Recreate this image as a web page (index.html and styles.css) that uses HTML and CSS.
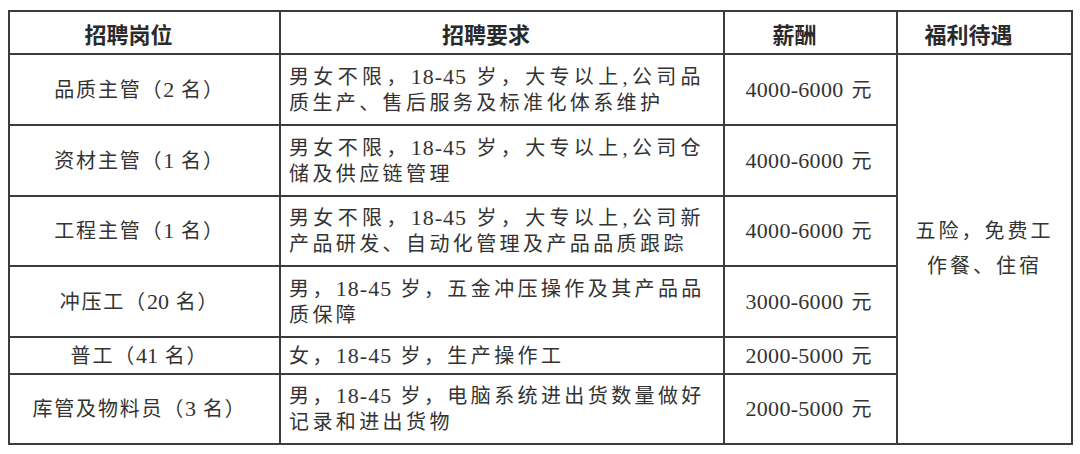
FILE: index.html
```html
<!DOCTYPE html>
<html lang="zh-CN">
<head>
<meta charset="utf-8">
<title>招聘</title>
<link rel="stylesheet" href="styles.css">
</head>
<body>
<table class="jobs">
  <colgroup>
    <col class="c1"><col class="c2"><col class="c3"><col class="c4">
  </colgroup>
  <thead>
    <tr class="head">
      <th>招聘岗位</th>
      <th>招聘要求</th>
      <th>薪酬</th>
      <th>福利待遇</th>
    </tr>
  </thead>
  <tbody>
    <tr class="r2">
      <td class="pos">品质主管（<span class="n">2</span> 名）</td>
      <td class="req"><span class="l1">男女不限，<span class="n">18-45</span> 岁，大专以上,公司品</span>质生产、售后服务及标准化体系维护</td>
      <td class="pay"><span class="n">4000-6000</span> 元</td>
      <td class="ben" rowspan="6">五险，免费工<br>作餐、住宿</td>
    </tr>
    <tr class="r2">
      <td class="pos">资材主管（<span class="n">1</span> 名）</td>
      <td class="req"><span class="l1">男女不限，<span class="n">18-45</span> 岁，大专以上,公司仓</span>储及供应链管理</td>
      <td class="pay"><span class="n">4000-6000</span> 元</td>
    </tr>
    <tr class="r2 r2b">
      <td class="pos">工程主管（<span class="n">1</span> 名）</td>
      <td class="req"><span class="l1">男女不限，<span class="n">18-45</span> 岁，大专以上,公司新</span>产品研发、自动化管理及产品品质跟踪</td>
      <td class="pay"><span class="n">4000-6000</span> 元</td>
    </tr>
    <tr class="r2">
      <td class="pos">冲压工（<span class="n">20</span> 名）</td>
      <td class="req"><span class="l1">男，<span class="n">18-45</span> 岁，五金冲压操作及其产品品</span>质保障</td>
      <td class="pay"><span class="n">3000-6000</span> 元</td>
    </tr>
    <tr class="r1">
      <td class="pos">普工（<span class="n">41</span> 名）</td>
      <td class="req">女，<span class="n">18-45</span> 岁，生产操作工</td>
      <td class="pay"><span class="n">2000-5000</span> 元</td>
    </tr>
    <tr class="r2 r2b">
      <td class="pos">库管及物料员（<span class="n">3</span> 名）</td>
      <td class="req"><span class="l1">男，<span class="n">18-45</span> 岁，电脑系统进出货数量做好</span>记录和进出货物</td>
      <td class="pay"><span class="n">2000-5000</span> 元</td>
    </tr>
  </tbody>
</table>
</body>
</html>
```

FILE: styles.css
```css
html, body {
  background: #ffffff;
}
body {
  margin: 10px 0 0 8px;
  font-family: "Liberation Serif", "Noto Sans CJK SC", serif;
  color: #333333;
}
.jobs {
  border-collapse: collapse;
  table-layout: fixed;
  width: 1063px;
}
.c1 { width: 271px; }
.c2 { width: 444px; }
.c3 { width: 173px; }
.c4 { width: 175px; }
.jobs th,
.jobs td {
  border: 2px solid #3c3c3c;
  padding: 0;
}
.jobs .head { height: 43px; }
.jobs .head th {
  font-family: "Noto Sans CJK SC", sans-serif;
  font-weight: 700;
  font-size: 22px;
  color: #2a2a2a;
  text-align: center;
  padding-right: 32px;
  line-height: 26px;
}
.jobs .r2 { height: 71px; }
.jobs .r2b { height: 70px; }
.jobs .r1 { height: 37px; }
.jobs td {
  font-size: 20px;
  line-height: 26px;
  letter-spacing: 3.4px;
  vertical-align: middle;
}
.jobs td.pos {
  text-align: center;
  letter-spacing: 1.8px;
  padding-right: 10px;
}
.jobs td.req {
  text-align: left;
  padding-left: 8px;
  white-space: nowrap;
}
.jobs td.req .l1 {
  display: block;
  width: 415px;
  text-align: justify;
  text-align-last: justify;
}
.jobs td.pay {
  text-align: center;
  letter-spacing: 0;
  word-spacing: 3px;
  padding-right: 4px;
}
.jobs td.ben {
  text-align: center;
  line-height: 35px;
  letter-spacing: 3px;
}
.jobs .n {
  font-family: "Liberation Serif", serif;
  font-size: 22px;
  letter-spacing: 1px;
}
.jobs td.pay .n {
  letter-spacing: 0.3px;
}
.jobs td.pos .n {
  letter-spacing: 0;
}
```
